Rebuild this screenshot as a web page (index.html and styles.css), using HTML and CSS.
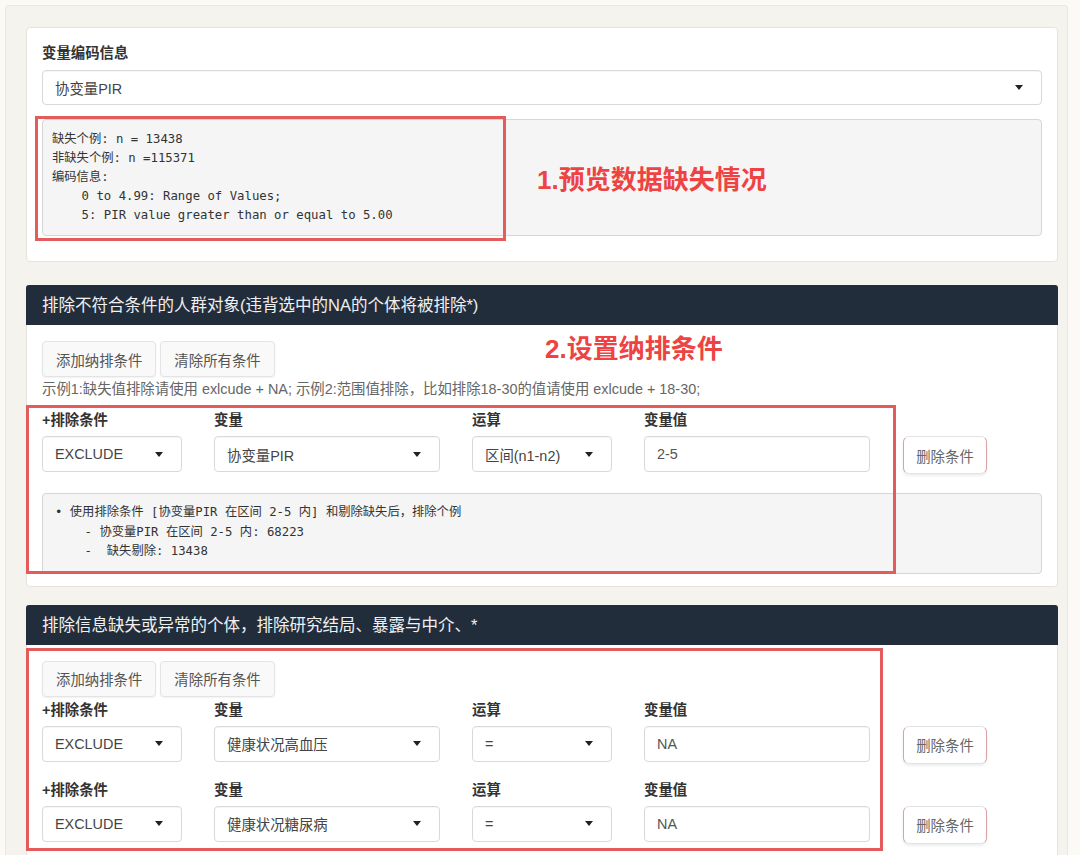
FILE: index.html
```html
<!DOCTYPE html>
<html lang="zh-CN">
<head>
<meta charset="utf-8">
<title>纳排条件</title>
<link rel="stylesheet" href="styles.css">
</head>
<body>
<div class="page">
  <div class="panel">
    <section class="card card-first">
      <div class="card-body">
        <div class="field-label">变量编码信息</div>
        <div class="select select-wide"><span class="select-text">协变量PIR</span><span class="caret"></span></div>
        <pre class="out out-coding">缺失个例: n = 13438
非缺失个例: n =115371
编码信息:
    0 to 4.99: Range of Values;
    5: PIR value greater than or equal to 5.00</pre>
      </div>
    </section>

    <section class="card card-second">
      <div class="card-head">排除不符合条件的人群对象(违背选中的NA的个体将被排除*)</div>
      <div class="card-body">
        <div class="btns">
          <button class="btn">添加纳排条件</button>
          <button class="btn">清除所有条件</button>
        </div>
        <p class="help">示例1:缺失值排除请使用 exlcude + NA; 示例2:范围值排除，比如排除18-30的值请使用 exlcude + 18-30;</p>
        <div class="cond-row cond-row-a">
          <div class="col col-type">
            <div class="field-label">+排除条件</div>
            <div class="select"><span class="select-text">EXCLUDE</span><span class="caret"></span></div>
          </div>
          <div class="col col-var">
            <div class="field-label">变量</div>
            <div class="select"><span class="select-text">协变量PIR</span><span class="caret"></span></div>
          </div>
          <div class="col col-op">
            <div class="field-label">运算</div>
            <div class="select"><span class="select-text">区间(n1-n2)</span><span class="caret"></span></div>
          </div>
          <div class="col col-val">
            <div class="field-label">变量值</div>
            <div class="input">2-5</div>
          </div>
          <div class="col col-del">
            <button class="btn-del">删除条件</button>
          </div>
        </div>
        <pre class="out out-summary">• 使用排除条件 [协变量PIR 在区间 2-5 内] 和剔除缺失后，排除个例
    - 协变量PIR 在区间 2-5 内: 68223
    -  缺失剔除: 13438</pre>
      </div>
    </section>

    <section class="card card-third">
      <div class="card-head">排除信息缺失或异常的个体，排除研究结局、暴露与中介、*</div>
      <div class="card-body">
        <div class="btns">
          <button class="btn">添加纳排条件</button>
          <button class="btn">清除所有条件</button>
        </div>
        <div class="cond-row cond-row-b">
          <div class="col col-type">
            <div class="field-label">+排除条件</div>
            <div class="select"><span class="select-text">EXCLUDE</span><span class="caret"></span></div>
          </div>
          <div class="col col-var">
            <div class="field-label">变量</div>
            <div class="select"><span class="select-text">健康状况高血压</span><span class="caret"></span></div>
          </div>
          <div class="col col-op">
            <div class="field-label">运算</div>
            <div class="select"><span class="select-text">=</span><span class="caret"></span></div>
          </div>
          <div class="col col-val">
            <div class="field-label">变量值</div>
            <div class="input">NA</div>
          </div>
          <div class="col col-del">
            <button class="btn-del">删除条件</button>
          </div>
        </div>
        <div class="cond-row cond-row-c">
          <div class="col col-type">
            <div class="field-label">+排除条件</div>
            <div class="select"><span class="select-text">EXCLUDE</span><span class="caret"></span></div>
          </div>
          <div class="col col-var">
            <div class="field-label">变量</div>
            <div class="select"><span class="select-text">健康状况糖尿病</span><span class="caret"></span></div>
          </div>
          <div class="col col-op">
            <div class="field-label">运算</div>
            <div class="select"><span class="select-text">=</span><span class="caret"></span></div>
          </div>
          <div class="col col-val">
            <div class="field-label">变量值</div>
            <div class="input">NA</div>
          </div>
          <div class="col col-del">
            <button class="btn-del">删除条件</button>
          </div>
        </div>
      </div>
    </section>
  </div>

  <div class="mark mark-1"></div>
  <div class="mark mark-2"></div>
  <div class="mark mark-3"></div>
  <div class="note note-1">1.预览数据缺失情况</div>
  <div class="note note-2">2.设置纳排条件</div>
</div>
</body>
</html>
```

FILE: styles.css
```css
* { box-sizing: border-box; }

html, body {
  margin: 0;
  padding: 0;
  background: #fbfaf7;
  height: 855px;
  overflow: hidden;
}

body {
  font-family: "Liberation Sans", "Noto Sans CJK SC", sans-serif;
  font-size: 14.4px;
  color: #333;
}

.page {
  position: relative;
  width: 1080px;
  height: 855px;
  overflow: hidden;
}

.panel {
  margin: 5px 12px 0 5px;
  padding: 21px 9px 0 20px;
  background: #f5f3ee;
  border: 1px solid #ece8e0;
  border-bottom: none;
  border-radius: 4px 4px 0 0;
  height: 850px;
}

.card {
  background: #fff;
  border: 1px solid #e7e3dc;
  border-radius: 4px;
}

.card-first { margin-bottom: 23px; }
.card-second { margin-bottom: 18px; }

.card-head {
  height: 40px;
  line-height: 40px;
  background: #222d3c;
  color: #f0f0f0;
  font-size: 16.5px;
  border-radius: 3px 3px 0 0;
  margin: -1px -1px 0 -1px;
  padding: 0 15px 0 16px;
}

.card-body {
  padding: 16px 15px;
}

.card-first .card-body { padding-bottom: 16px; }
.card-second .card-body { padding-bottom: 12px; }

.field-label {
  font-weight: bold;
  line-height: 18px;
  height: 18px;
  color: #333;
  margin-bottom: 7px;
}

.card-first .field-label { margin-bottom: 8px; }

.select, .input {
  height: 36px;
  border: 1px solid #d9d9d9;
  border-radius: 4px;
  background: #fff;
  box-shadow: inset 0 1px 1px rgba(0, 0, 0, 0.04);
  display: flex;
  align-items: center;
  padding: 0 12px;
  color: #444;
  white-space: nowrap;
}

.select-wide { height: 35px; }

.select-text { flex: 1; }

.caret {
  width: 0;
  height: 0;
  border-top: 5px solid #222;
  border-left: 4.5px solid transparent;
  border-right: 4.5px solid transparent;
  margin-right: 6px;
}

.out {
  margin: 0;
  background: #f5f5f5;
  border: 1px solid #d6d6d6;
  border-radius: 4px;
  font-family: "DejaVu Sans Mono", "Noto Sans CJK SC", monospace;
  font-size: 12.3px;
  color: #333;
  white-space: pre;
}

.out-coding {
  margin-top: 14px;
  margin-bottom: 9px;
  padding: 10px 9px;
  line-height: 19px;
}

.out-summary {
  margin-top: 19px;
  padding: 9px 12px 11px;
  line-height: 19.5px;
}

.btns {
  display: flex;
  gap: 4px;
}

.btn {
  height: 36px;
  padding: 0 13px;
  font-family: inherit;
  font-size: 14.4px;
  color: #555;
  background: #f9f9f9;
  border: 1px solid #e4e4e4;
  border-radius: 4px;
  box-shadow: 0 1px 2px rgba(0, 0, 0, 0.06);
}

.help {
  margin: 3px 0 0;
  line-height: 18px;
  color: #666;
  white-space: nowrap;
}

.cond-row {
  display: flex;
  align-items: flex-start;
}

.cond-row-a { margin-top: 13px; }
.cond-row-b { margin-top: 4px; }
.cond-row-c { margin-top: 17px; }

.col { flex: none; }
.col-type { width: 140px; margin-right: 32px; }
.col-var { width: 226px; margin-right: 32px; }
.col-op { width: 140px; margin-right: 32px; }
.col-val { width: 226px; margin-right: 33px; }
.col-del { padding-top: 25px; }

.input { color: #555; }

.btn-del {
  width: 84px;
  height: 38px;
  padding: 0;
  font-family: inherit;
  font-size: 14.4px;
  color: #666;
  background: #fff;
  border: 1px solid #e2e2e2;
  border-left-color: #d9a3a3;
  border-right-color: #d9a3a3;
  border-radius: 6px;
  box-shadow: 0 2px 3px rgba(0, 0, 0, 0.07);
}

.mark {
  position: absolute;
  border: 3px solid #e35b5b;
}

.mark-1 { left: 35px; top: 116px; width: 471px; height: 125px; }
.mark-2 { left: 26px; top: 405px; width: 870px; height: 169px; }
.mark-3 { left: 26px; top: 648px; width: 857px; height: 203px; }

.note {
  position: absolute;
  font-family: "Liberation Sans", "Noto Sans CJK SC", sans-serif;
  font-weight: bold;
  font-size: 26px;
  line-height: 30px;
  color: #ee4343;
  white-space: nowrap;
}

.note-1 { left: 537px; top: 165px; }
.note-2 { left: 545px; top: 334px; }
```
